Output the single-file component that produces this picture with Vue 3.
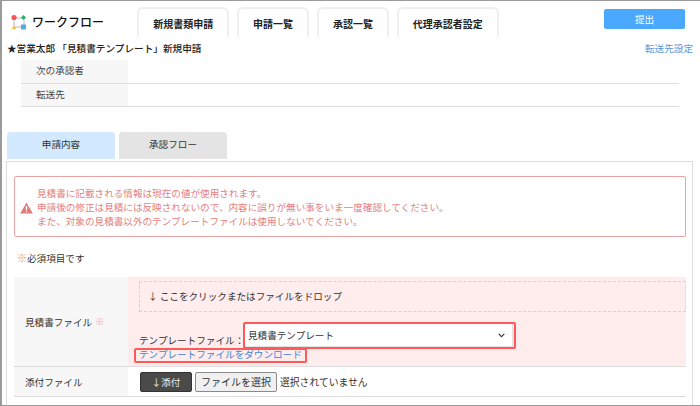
<script setup>
const navTabs = ['新規書類申請', '申請一覧', '承認一覧', '代理承認者設定']
</script>

<template>
  <div class="page">
    <header class="top">
      <div class="logo">
        <svg class="logo-icon" width="16" height="16" viewBox="0 0 16 16">
          <path d="M3 4V13M3 4H13M13 4V11M4 13H11" stroke="#cfcfcf" stroke-width="1.4" fill="none" />
          <circle cx="3" cy="3.5" r="2.6" fill="#ef5a5a" />
          <path d="M12.5 1L15 3.5L12.5 6L10 3.5Z" fill="#2fae6b" />
          <path d="M3 11.5L5.5 15H0.5Z" fill="#f5c04f" />
          <rect x="10" y="10.5" width="5" height="5" fill="#57a9de" />
        </svg>
        <span class="logo-text">ワークフロー</span>
      </div>
      <nav class="nav">
        <a v-for="t in navTabs" :key="t" class="nav-tab">{{ t }}</a>
      </nav>
      <div class="actions">
        <button class="submit">提出</button>
      </div>
    </header>

    <div class="title-row">
      <h1 class="title">★営業太郎 「見積書テンプレート」新規申請</h1>
      <a class="forward-link">転送先設定</a>
    </div>

    <div class="info">
      <div class="info-row">
        <div class="info-label">次の承認者</div>
      </div>
      <div class="info-row">
        <div class="info-label">転送先</div>
      </div>
    </div>

    <div class="sub-tabs">
      <div class="sub-tab active">申請内容</div>
      <div class="sub-tab">承認フロー</div>
    </div>

    <section class="panel">
      <div class="alert">
        <svg class="alert-icon" width="13" height="12" viewBox="0 0 13 12">
          <path d="M6.5 0.5L12.8 11.5H0.2Z" fill="#dd7b7b" />
          <rect x="5.8" y="4" width="1.4" height="4" fill="#fff" />
          <rect x="5.8" y="8.8" width="1.4" height="1.4" fill="#fff" />
        </svg>
        <div class="alert-text">
          <div>見積書に記載される情報は現在の値が使用されます。</div>
          <div>申請後の修正は見積には反映されないので、内容に誤りが無い事をいま一度確認してください。</div>
          <div>また、対象の見積書以外のテンプレートファイルは使用しないでください。</div>
        </div>
      </div>

      <p class="required"><span class="mark">※</span>必須項目です</p>

      <div class="form">
        <div class="form-row">
          <div class="form-label">見積書ファイル <span class="mark small">※</span></div>
          <div class="form-value pink">
            <div class="drop">↓ ここをクリックまたはファイルをドロップ</div>
            <div class="template-row">
              <span class="template-label">テンプレートファイル：</span>
              <div class="select">
                <span>見積書テンプレート</span>
                <svg width="7" height="5" viewBox="0 0 7 5">
                  <path d="M0.7 0.8L3.5 3.6L6.3 0.8" stroke="#333" stroke-width="1.1" fill="none" />
                </svg>
              </div>
            </div>
            <a class="download">テンプレートファイルをダウンロード</a>
          </div>
        </div>
        <div class="form-row">
          <div class="form-label">添付ファイル</div>
          <div class="form-value file-row">
            <button class="attach">↓添付</button>
            <button class="choose">ファイルを選択</button>
            <span class="none">選択されていません</span>
          </div>
        </div>
      </div>
    </section>
  </div>
</template>

<style scoped>
.page {
  width: 700px;
  height: 406px;
  box-sizing: border-box;
  border: 1px solid #9a9a9a;
  border-left-width: 2px;
  border-right: 0;
  background: #fff;
  overflow: hidden;
  font-family: "Noto Sans CJK JP", "Noto Sans", sans-serif;
  font-size: 9.6px;
  color: #333;
}
.top {
  display: flex;
  align-items: flex-start;
  height: 36px;
}
.logo {
  display: flex;
  align-items: center;
  gap: 5px;
  width: 135px;
  padding: 13px 0 0 9px;
  box-sizing: border-box;
}
.logo-text {
  font-size: 12px;
  font-weight: 500;
  line-height: 16px;
  color: #111;
}
.nav {
  display: flex;
  gap: 7.5px;
  padding-top: 6px;
}
.nav-tab {
  height: 30px;
  box-sizing: border-box;
  border: 2px solid #efefef;
  border-bottom: 0;
  border-radius: 6px 6px 0 0;
  padding: 0 14.2px;
  font-size: 10px;
  font-weight: 700;
  line-height: 29px;
  color: #222;
}
.actions {
  margin-left: auto;
  padding: 8px 15px 0 0;
}
.submit {
  display: block;
  width: 81px;
  height: 20px;
  border: 0;
  border-radius: 2px;
  background: #4aa9ff;
  color: #fff;
  font: inherit;
  padding: 0;
}
.title-row {
  display: flex;
  justify-content: space-between;
  align-items: flex-start;
  height: 23px;
  padding: 4px 7px 0 5px;
  box-sizing: border-box;
}
.title {
  margin: 0;
  font-size: 9.65px;
  line-height: 15px;
  font-weight: 500;
  color: #222;
}
.forward-link {
  line-height: 14px;
  color: #5b97dc;
}
.info {
  margin: 0 21px 0 19px;
}
.info-row {
  height: 24px;
  border-bottom: 1px solid #dedede;
  box-sizing: border-box;
}
.info-row + .info-row {
  height: 23px;
}
.info-label {
  width: 107px;
  height: 100%;
  background: #f7f7f7;
  box-sizing: border-box;
  padding-left: 15px;
  line-height: 21px;
  color: #444;
}
.sub-tabs {
  display: flex;
  gap: 4px;
  margin: 25px 0 0 5px;
}
.sub-tab {
  width: 108px;
  height: 27px;
  background: #e4e4e4;
  border-radius: 4px 4px 0 0;
  text-align: center;
  line-height: 25px;
  color: #333;
}
.sub-tab.active {
  background: #d2e9ff;
}
.panel {
  margin: 2px 7px 0 4px;
  height: 260px;
  box-sizing: border-box;
  border: 1px solid #dcdcdc;
  border-bottom: 0;
  padding: 14px 6px 0 7px;
}
.alert {
  display: flex;
  align-items: center;
  height: 61px;
  box-sizing: border-box;
  border: 1px solid #eda3a3;
  border-radius: 2px;
  padding-left: 5px;
  color: #e58080;
  line-height: 14px;
}
.alert-icon {
  margin: 2px 4px 0 0;
  flex: none;
}
.required {
  margin: 14px 0 0 3px;
  line-height: 14px;
  color: #333;
}
.mark {
  color: #ee8f6a;
  font-size: 10px;
}
.mark.small {
  color: #f0a0a0;
  font-size: 9px;
}
.form {
  margin-top: 12px;
}
.form-row {
  display: flex;
  border-bottom: 1px solid #dcdcdc;
}
.form-label {
  width: 114px;
  flex: none;
  background: #f7f7f7;
  display: flex;
  align-items: center;
  padding-left: 11px;
  box-sizing: border-box;
  gap: 3px;
  color: #333;
}
.form-value {
  flex: 1;
  min-width: 0;
}
.pink {
  height: 89px;
  background: #ffecec;
  padding: 4px 0 0 11px;
  box-sizing: border-box;
}
.drop {
  height: 31px;
  box-sizing: border-box;
  border: 1px dashed #d8d0d0;
  border-right-style: dotted;
  padding-left: 8px;
  line-height: 29px;
  color: #333;
}
.template-row {
  display: flex;
  align-items: flex-end;
  margin-top: 10px;
}
.template-label {
  line-height: 14px;
  color: #333;
  width: 104px;
  white-space: nowrap;
  margin-bottom: 2px;
}
.select {
  width: 273px;
  height: 27px;
  box-sizing: border-box;
  background: #fff;
  border: 2px solid #ff5a5a;
  border-radius: 2px;
  display: flex;
  align-items: center;
  justify-content: space-between;
  padding: 0 9px 1px 3px;
  box-shadow: inset -2px -1px 0 #e6e2e2;
  color: #333;
}
.download {
  display: block;
  width: fit-content;
  margin: -1px 0 0 -5px;
  border: 2px solid #ff5a5a;
  border-radius: 2px;
  padding: 0 3px 3px 3px;
  line-height: 8px;
  color: #3d83d8;
}
.file-row {
  height: 29px;
  display: flex;
  align-items: center;
  padding-left: 12px;
  gap: 3px;
}
.attach {
  width: 52px;
  height: 20px;
  padding: 0;
  background: #4a4a4a;
  border: 1px solid #333;
  border-radius: 2px;
  color: #eee;
  font: inherit;
}
.choose {
  height: 20px;
  padding: 0 5px;
  background: #f0f0f0;
  border: 1px solid #8a8a8a;
  border-radius: 2px;
  color: #333;
  font: inherit;
  font-size: 10px;
}
.none {
  font-size: 9.8px;
  color: #333;
}
</style>
